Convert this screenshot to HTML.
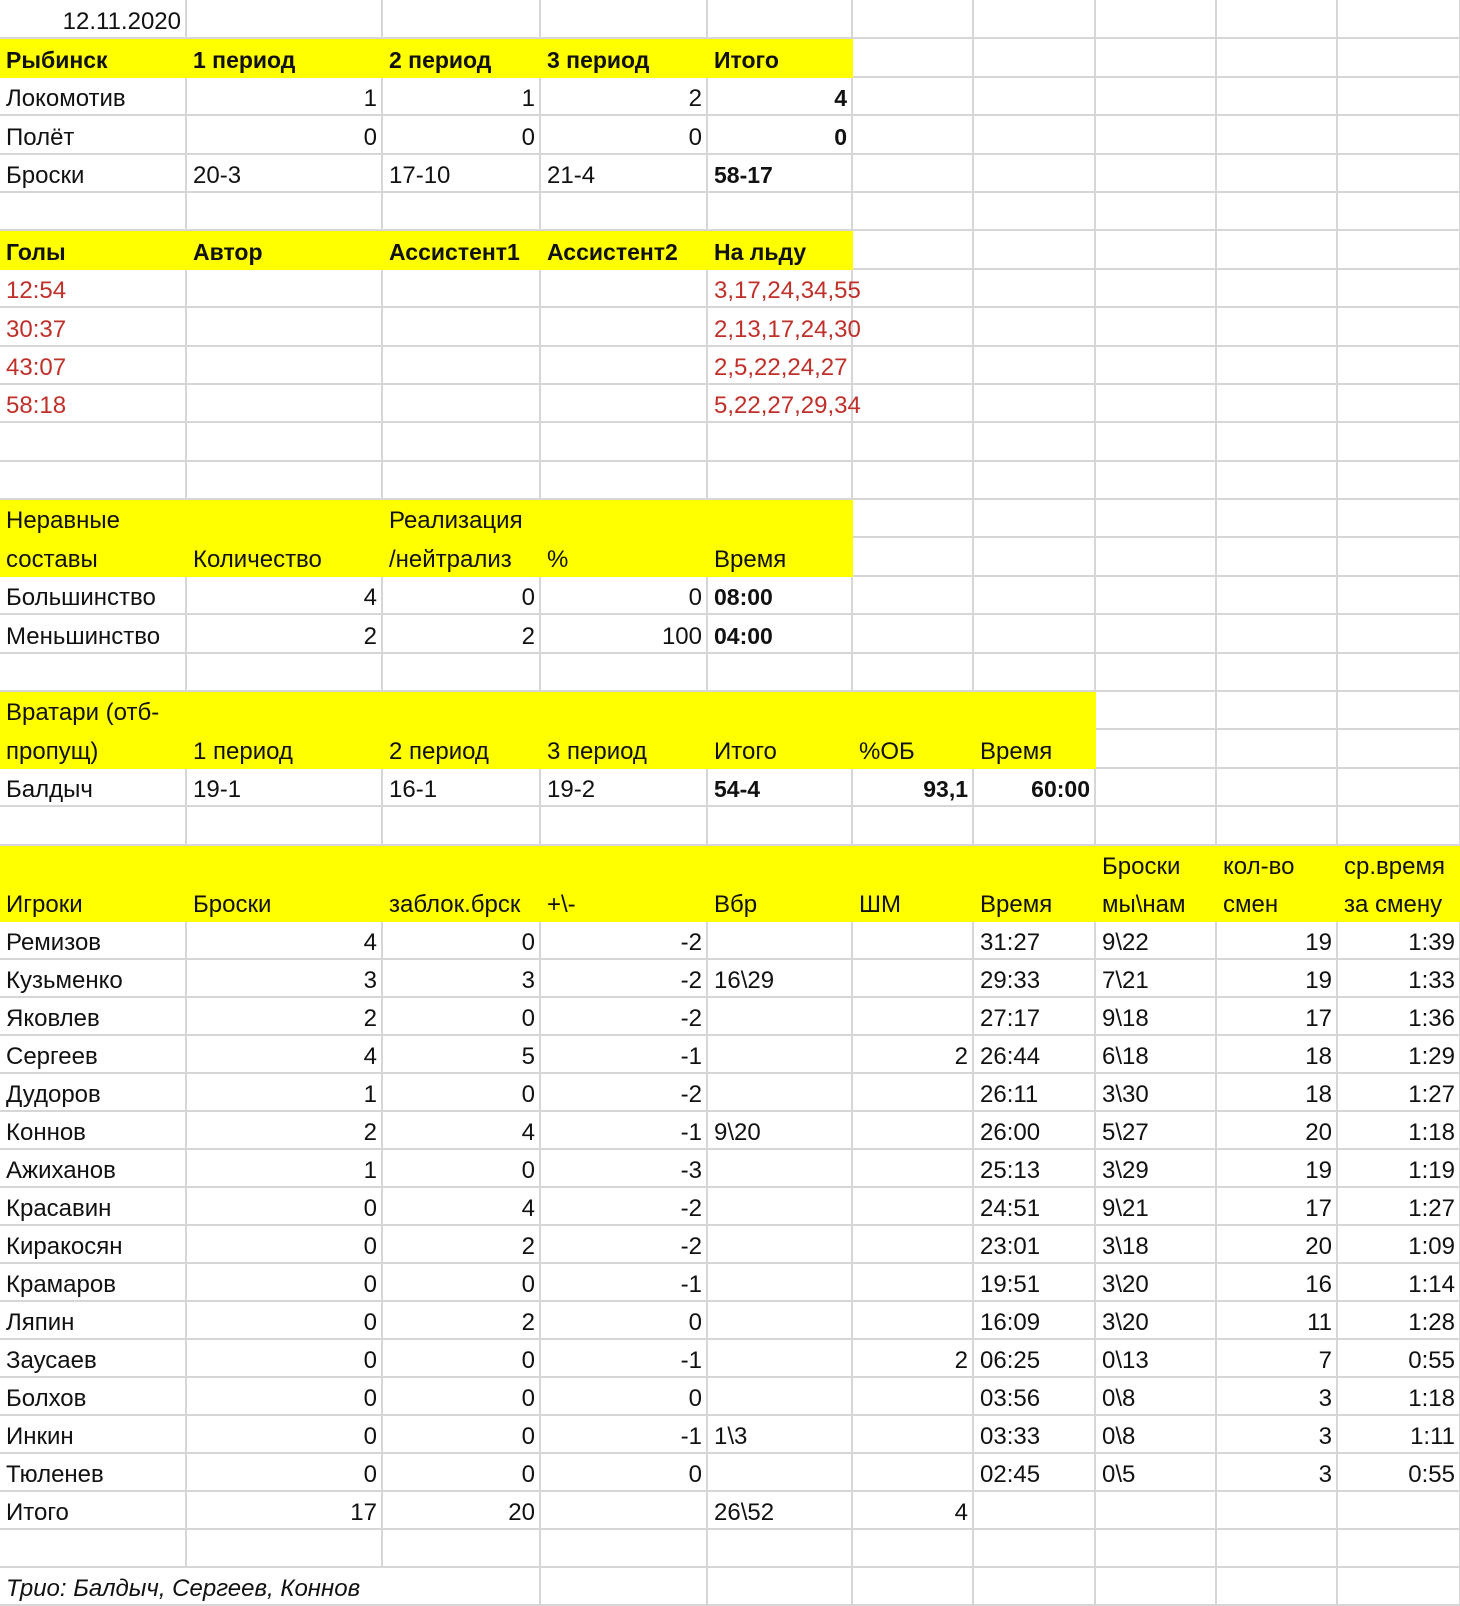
<!DOCTYPE html>
<html><head><meta charset="utf-8">
<style>
html,body{margin:0;padding:0;background:#fff;}
body{width:1460px;height:1606px;overflow:hidden;}
table{border-collapse:collapse;table-layout:fixed;width:1460px;font-family:"Liberation Sans",sans-serif;font-size:24px;color:#111;}
td{border-right:2px solid #d6d6d6;border-bottom:2px solid #d6d6d6;padding:0 4px 2px 6px;vertical-align:bottom;white-space:nowrap;overflow:visible;line-height:27px;}
tr.a{height:38.4px;}
tr.c{height:38px;}
.r{text-align:right;}
.b{font-weight:bold;font-size:23px;}
.y{background:#ffff00;border-color:#ffff00;}
.red{color:#c0302a;}
.i{font-style:italic;}
.hb td.y{border-bottom-color:#ffff00;}
</style></head><body>
<table>
<colgroup><col style="width:186px"><col style="width:196px"><col style="width:158px"><col style="width:167px"><col style="width:145px"><col style="width:121px"><col style="width:122px"><col style="width:121px"><col style="width:121px"><col style="width:123px"></colgroup>
<tr class="a"><td class="r">12.11.2020</td><td></td><td></td><td></td><td></td><td></td><td></td><td></td><td></td><td></td></tr>
<tr class="a"><td class="y b">Рыбинск</td><td class="y b">1 период</td><td class="y b">2 период</td><td class="y b">3 период</td><td class="y b">Итого</td><td></td><td></td><td></td><td></td><td></td></tr>
<tr class="a"><td>Локомотив</td><td class="r">1</td><td class="r">1</td><td class="r">2</td><td class="r b">4</td><td></td><td></td><td></td><td></td><td></td></tr>
<tr class="a"><td>Полёт</td><td class="r">0</td><td class="r">0</td><td class="r">0</td><td class="r b">0</td><td></td><td></td><td></td><td></td><td></td></tr>
<tr class="a"><td>Броски</td><td>20-3</td><td>17-10</td><td>21-4</td><td class="b">58-17</td><td></td><td></td><td></td><td></td><td></td></tr>
<tr class="a"><td></td><td></td><td></td><td></td><td></td><td></td><td></td><td></td><td></td><td></td></tr>
<tr class="a"><td class="y b">Голы</td><td class="y b">Автор</td><td class="y b">Ассистент1</td><td class="y b">Ассистент2</td><td class="y b">На льду</td><td></td><td></td><td></td><td></td><td></td></tr>
<tr class="a"><td class="red">12:54</td><td></td><td></td><td></td><td class="red">3,17,24,34,55</td><td></td><td></td><td></td><td></td><td></td></tr>
<tr class="a"><td class="red">30:37</td><td></td><td></td><td></td><td class="red">2,13,17,24,30</td><td></td><td></td><td></td><td></td><td></td></tr>
<tr class="a"><td class="red">43:07</td><td></td><td></td><td></td><td class="red">2,5,22,24,27</td><td></td><td></td><td></td><td></td><td></td></tr>
<tr class="a"><td class="red">58:18</td><td></td><td></td><td></td><td class="red">5,22,27,29,34</td><td></td><td></td><td></td><td></td><td></td></tr>
<tr class="a"><td></td><td></td><td></td><td></td><td></td><td></td><td></td><td></td><td></td><td></td></tr>
<tr class="a"><td></td><td></td><td></td><td></td><td></td><td></td><td></td><td></td><td></td><td></td></tr>
<tr class="a hb"><td class="y">Неравные</td><td class="y"></td><td class="y">Реализация</td><td class="y"></td><td class="y"></td><td></td><td></td><td></td><td></td><td></td></tr>
<tr class="a"><td class="y">составы</td><td class="y">Количество</td><td class="y" style="overflow:hidden">/нейтрализ</td><td class="y">%</td><td class="y">Время</td><td></td><td></td><td></td><td></td><td></td></tr>
<tr class="a"><td>Большинство</td><td class="r">4</td><td class="r">0</td><td class="r">0</td><td class="b">08:00</td><td></td><td></td><td></td><td></td><td></td></tr>
<tr class="a"><td>Меньшинство</td><td class="r">2</td><td class="r">2</td><td class="r">100</td><td class="b">04:00</td><td></td><td></td><td></td><td></td><td></td></tr>
<tr class="a"><td></td><td></td><td></td><td></td><td></td><td></td><td></td><td></td><td></td><td></td></tr>
<tr class="a hb"><td class="y">Вратари (отб-</td><td class="y"></td><td class="y"></td><td class="y"></td><td class="y"></td><td class="y"></td><td class="y"></td><td></td><td></td><td></td></tr>
<tr class="a"><td class="y">пропущ)</td><td class="y">1 период</td><td class="y">2 период</td><td class="y">3 период</td><td class="y">Итого</td><td class="y">%ОБ</td><td class="y">Время</td><td></td><td></td><td></td></tr>
<tr class="a"><td>Балдыч</td><td>19-1</td><td>16-1</td><td>19-2</td><td class="b">54-4</td><td class="r b">93,1</td><td class="r b">60:00</td><td></td><td></td><td></td></tr>
<tr class="a"><td></td><td></td><td></td><td></td><td></td><td></td><td></td><td></td><td></td><td></td></tr>
<tr class="a hb"><td class="y"></td><td class="y"></td><td class="y"></td><td class="y"></td><td class="y"></td><td class="y"></td><td class="y"></td><td class="y">Броски</td><td class="y">кол-во</td><td class="y">ср.время</td></tr>
<tr class="a"><td class="y">Игроки</td><td class="y">Броски</td><td class="y">заблок.брск</td><td class="y">+\-</td><td class="y">Вбр</td><td class="y">ШМ</td><td class="y">Время</td><td class="y">мы\нам</td><td class="y">смен</td><td class="y">за смену</td></tr>
<tr class="c"><td>Ремизов</td><td class="r">4</td><td class="r">0</td><td class="r">-2</td><td></td><td></td><td>31:27</td><td>9\22</td><td class="r">19</td><td class="r">1:39</td></tr>
<tr class="c"><td>Кузьменко</td><td class="r">3</td><td class="r">3</td><td class="r">-2</td><td>16\29</td><td></td><td>29:33</td><td>7\21</td><td class="r">19</td><td class="r">1:33</td></tr>
<tr class="c"><td>Яковлев</td><td class="r">2</td><td class="r">0</td><td class="r">-2</td><td></td><td></td><td>27:17</td><td>9\18</td><td class="r">17</td><td class="r">1:36</td></tr>
<tr class="c"><td>Сергеев</td><td class="r">4</td><td class="r">5</td><td class="r">-1</td><td></td><td class="r">2</td><td>26:44</td><td>6\18</td><td class="r">18</td><td class="r">1:29</td></tr>
<tr class="c"><td>Дудоров</td><td class="r">1</td><td class="r">0</td><td class="r">-2</td><td></td><td></td><td>26:11</td><td>3\30</td><td class="r">18</td><td class="r">1:27</td></tr>
<tr class="c"><td>Коннов</td><td class="r">2</td><td class="r">4</td><td class="r">-1</td><td>9\20</td><td></td><td>26:00</td><td>5\27</td><td class="r">20</td><td class="r">1:18</td></tr>
<tr class="c"><td>Ажиханов</td><td class="r">1</td><td class="r">0</td><td class="r">-3</td><td></td><td></td><td>25:13</td><td>3\29</td><td class="r">19</td><td class="r">1:19</td></tr>
<tr class="c"><td>Красавин</td><td class="r">0</td><td class="r">4</td><td class="r">-2</td><td></td><td></td><td>24:51</td><td>9\21</td><td class="r">17</td><td class="r">1:27</td></tr>
<tr class="c"><td>Киракосян</td><td class="r">0</td><td class="r">2</td><td class="r">-2</td><td></td><td></td><td>23:01</td><td>3\18</td><td class="r">20</td><td class="r">1:09</td></tr>
<tr class="c"><td>Крамаров</td><td class="r">0</td><td class="r">0</td><td class="r">-1</td><td></td><td></td><td>19:51</td><td>3\20</td><td class="r">16</td><td class="r">1:14</td></tr>
<tr class="c"><td>Ляпин</td><td class="r">0</td><td class="r">2</td><td class="r">0</td><td></td><td></td><td>16:09</td><td>3\20</td><td class="r">11</td><td class="r">1:28</td></tr>
<tr class="c"><td>Заусаев</td><td class="r">0</td><td class="r">0</td><td class="r">-1</td><td></td><td class="r">2</td><td>06:25</td><td>0\13</td><td class="r">7</td><td class="r">0:55</td></tr>
<tr class="c"><td>Болхов</td><td class="r">0</td><td class="r">0</td><td class="r">0</td><td></td><td></td><td>03:56</td><td>0\8</td><td class="r">3</td><td class="r">1:18</td></tr>
<tr class="c"><td>Инкин</td><td class="r">0</td><td class="r">0</td><td class="r">-1</td><td>1\3</td><td></td><td>03:33</td><td>0\8</td><td class="r">3</td><td class="r">1:11</td></tr>
<tr class="c"><td>Тюленев</td><td class="r">0</td><td class="r">0</td><td class="r">0</td><td></td><td></td><td>02:45</td><td>0\5</td><td class="r">3</td><td class="r">0:55</td></tr>
<tr class="c"><td>Итого</td><td class="r">17</td><td class="r">20</td><td></td><td>26\52</td><td class="r">4</td><td></td><td></td><td></td><td></td></tr>
<tr class="c"><td></td><td></td><td></td><td></td><td></td><td></td><td></td><td></td><td></td><td></td></tr>
<tr class="c"><td class="i" colspan="3">Трио: Балдыч, Сергеев, Коннов</td><td></td><td></td><td></td><td></td><td></td><td></td><td></td></tr>
</table>
</body></html>
